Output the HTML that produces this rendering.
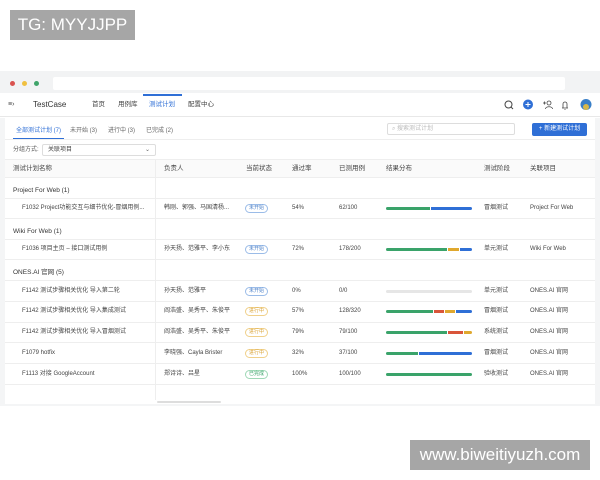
<!DOCTYPE html>
<html><head><meta charset="utf-8"><style>
*{margin:0;padding:0;box-sizing:border-box}
body{width:600px;height:480px;background:#fff;position:relative;overflow:hidden;font-family:"Liberation Sans","Noto Sans CJK SC",sans-serif;color:#333}
.a{position:absolute;white-space:nowrap;line-height:8px}
.wm{position:absolute;background:#a6a6a6;color:#fff;font-size:17px;display:flex;align-items:center;justify-content:center;line-height:20px}
.f7{font-size:6.5px;color:#444}
.tag{position:absolute;font-size:5px;border:1px solid;border-radius:6px;padding:0 3px;line-height:7px;height:9px}
.bar{position:absolute;height:3px;border-radius:2px;display:flex;overflow:hidden;width:86px;left:386px}
.line{position:absolute;left:5px;width:590px;height:1px;background:#eee}
</style></head><body>
<div class="wm" style="left:10px;top:10px;width:125px;height:30px">TG: MYYJJPP</div>
<div class="wm" style="left:410px;top:440px;width:180px;height:30px">www.biweitiyuzh.com</div>

<div class="a" style="left:0;top:71px;width:600px;height:22px;background:#f2f3f4"></div>
<div class="a" style="left:10px;top:81px;width:5px;height:5px;border-radius:50%;background:#d9534f"></div>
<div class="a" style="left:22px;top:81px;width:5px;height:5px;border-radius:50%;background:#f0c040"></div>
<div class="a" style="left:34px;top:81px;width:5px;height:5px;border-radius:50%;background:#3fa46a"></div>
<div class="a" style="left:53px;top:77px;width:512px;height:13px;background:#fff;border-radius:2px"></div>

<div class="a" style="left:0;top:93px;width:600px;height:24px;background:#fff;border-bottom:1px solid #e8e8e8"></div>
<div class="a f7" style="left:8px;top:101px;font-size:7px">≡›</div>
<div class="a" style="left:33px;top:101px;font-size:8px;color:#333">TestCase</div>
<div class="a f7" style="left:92px;top:101px">首页</div>
<div class="a f7" style="left:118px;top:101px">用例库</div>
<div class="a f7" style="left:149px;top:101px;color:#2f6fd6">测试计划</div>
<div class="a" style="left:143px;top:94px;width:39px;height:1.5px;background:#2f6fd6"></div>
<div class="a f7" style="left:188px;top:101px">配置中心</div>
<svg class="a" style="left:503px;top:99px" width="90" height="12" viewBox="0 0 90 12">
<circle cx="5.5" cy="5.5" r="3.5" fill="none" stroke="#444" stroke-width="1"/><line x1="8" y1="8" x2="10" y2="10" stroke="#444"/>
<circle cx="25" cy="5.5" r="5" fill="#2f6fd6"/><path d="M22.5 5.5h5M25 3v5" stroke="#fff" stroke-width="1"/>
<circle cx="46" cy="4" r="2" fill="none" stroke="#444" stroke-width=".8"/><path d="M42.5 10c0-3 7-3 7 0M40 4h3M41.5 2.5v3" fill="none" stroke="#444" stroke-width=".8"/>
<path d="M59 9h6M60 9V5a2 2 0 014 0v4M61.5 10.5h1" fill="none" stroke="#444" stroke-width=".8"/>
<circle cx="83" cy="5.5" r="5.5" fill="#3a7fc8"/><circle cx="83" cy="8" r="3" fill="#d8b84a"/>
</svg>

<div class="a" style="left:0;top:118px;width:600px;height:288px;background:#f4f5f6"></div>
<div class="a" style="left:5px;top:118px;width:590px;height:286px;background:#fff"></div>

<div class="a" style="left:16px;top:127px;font-size:6px;color:#2f6fd6">全部测试计划 (7)</div>
<div class="a" style="left:13px;top:138px;width:51px;height:1.5px;background:#2f6fd6"></div>
<div class="a" style="left:70px;top:127px;font-size:6px;color:#666">未开始 (3)</div>
<div class="a" style="left:108px;top:127px;font-size:6px;color:#666">进行中 (3)</div>
<div class="a" style="left:146px;top:127px;font-size:6px;color:#666">已完成 (2)</div>
<div class="a" style="left:387px;top:123px;width:128px;height:12px;border:1px solid #ddd;border-radius:2px"></div>
<div class="a" style="left:392px;top:125px;font-size:6px;color:#bbb">⌕ 搜索测试计划</div>
<div class="a" style="left:532px;top:123px;width:55px;height:13px;background:#2f6fd6;border-radius:2px;color:#fff;font-size:6px;text-align:center;line-height:13px">+ 新建测试计划</div>
<div class="a" style="left:5px;top:139px;width:590px;height:1px;background:#eee"></div>

<div class="a" style="left:13px;top:146px;font-size:6px;color:#555">分组方式:</div>
<div class="a" style="left:42px;top:144px;width:114px;height:12px;border:1px solid #ddd;border-radius:2px"></div>
<div class="a" style="left:48px;top:146px;font-size:6px;color:#444">关联项目</div>
<div class="a" style="left:145px;top:146px;font-size:6px;color:#666">⌄</div>

<div class="a" style="left:5px;top:159px;width:590px;height:19px;background:#fafafa;border-top:1px solid #eee;border-bottom:1px solid #eee"></div>
<div class="a" style="left:155px;top:159px;width:1px;height:241px;background:#eee"></div>
<div class="a f7" style="left:13px;top:165px">测试计划名称</div>
<div class="a f7" style="left:164px;top:165px">负责人</div>
<div class="a f7" style="left:246px;top:165px">当前状态</div>
<div class="a f7" style="left:292px;top:165px">通过率</div>
<div class="a f7" style="left:339px;top:165px">已测用例</div>
<div class="a f7" style="left:386px;top:165px">结果分布</div>
<div class="a f7" style="left:484px;top:165px">测试阶段</div>
<div class="a f7" style="left:530px;top:165px">关联项目</div>

<div class="a f7" style="left:13px;top:187px;color:#333">Project For Web (1)</div>
<div class="line" style="top:198px"></div>
<div class="line" style="top:218px"></div>
<div class="a f7" style="left:13px;top:228px;color:#333">Wiki For Web (1)</div>
<div class="line" style="top:239px"></div>
<div class="line" style="top:259px"></div>
<div class="a f7" style="left:13px;top:269px;color:#333">ONES.AI 官网 (5)</div>
<div class="line" style="top:280px"></div>
<div class="line" style="top:301px"></div>
<div class="line" style="top:322px"></div>
<div class="line" style="top:342px"></div>
<div class="line" style="top:363px"></div>
<div class="line" style="top:384px"></div>
<div class="a" style="left:157px;top:401px;width:64px;height:2px;background:#ddd;border-radius:1px"></div>

<div class="a f7" style="left:22px;top:204px;font-size:6px">F1032 Project功能交互与细节优化-冒烟用例...</div>
<div class="a f7" style="left:164px;top:204px;font-size:6px">韩刚、郭强、马国清杨...</div>
<div class="tag" style="left:245px;top:204px;color:#4a7fc8;border-color:#9bbce8">未开始</div>
<div class="a f7" style="left:292px;top:204px;font-size:6px">54%</div>
<div class="a f7" style="left:339px;top:204px;font-size:6px">62/100</div>
<div class="bar" style="top:207px"><i style="width:44px;background:#3aa36a"></i><i style="width:1px;background:#fff"></i><i style="flex:1;background:#2f6fd6"></i></div>
<div class="a f7" style="left:484px;top:204px;font-size:6px">冒烟测试</div>
<div class="a f7" style="left:530px;top:204px;font-size:6px">Project For Web</div>

<div class="a f7" style="left:22px;top:245px;font-size:6px">F1036 项目主页 – 接口测试用例</div>
<div class="a f7" style="left:164px;top:245px;font-size:6px">孙天扬、范雅平、李小东</div>
<div class="tag" style="left:245px;top:245px;color:#4a7fc8;border-color:#9bbce8">未开始</div>
<div class="a f7" style="left:292px;top:245px;font-size:6px">72%</div>
<div class="a f7" style="left:339px;top:245px;font-size:6px">178/200</div>
<div class="bar" style="top:248px"><i style="width:61px;background:#3aa36a"></i><i style="width:1px;background:#fff"></i><i style="width:11px;background:#e0a82e"></i><i style="width:1px;background:#fff"></i><i style="flex:1;background:#2f6fd6"></i></div>
<div class="a f7" style="left:484px;top:245px;font-size:6px">单元测试</div>
<div class="a f7" style="left:530px;top:245px;font-size:6px">Wiki For Web</div>

<div class="a f7" style="left:22px;top:287px;font-size:6px">F1142 测试步骤相关优化 导入第二轮</div>
<div class="a f7" style="left:164px;top:287px;font-size:6px">孙天扬、范雅平</div>
<div class="tag" style="left:245px;top:287px;color:#4a7fc8;border-color:#9bbce8">未开始</div>
<div class="a f7" style="left:292px;top:287px;font-size:6px">0%</div>
<div class="a f7" style="left:339px;top:287px;font-size:6px">0/0</div>
<div class="bar" style="top:290px;background:#e6e6e6"></div>
<div class="a f7" style="left:484px;top:287px;font-size:6px">单元测试</div>
<div class="a f7" style="left:530px;top:287px;font-size:6px">ONES.AI 官网</div>

<div class="a f7" style="left:22px;top:307px;font-size:6px">F1142 测试步骤相关优化 导入集成测试</div>
<div class="a f7" style="left:164px;top:307px;font-size:6px">阎浩盛、吴秀平、朱俊平</div>
<div class="tag" style="left:245px;top:307px;color:#d9a030;border-color:#f0d08a">进行中</div>
<div class="a f7" style="left:292px;top:307px;font-size:6px">57%</div>
<div class="a f7" style="left:339px;top:307px;font-size:6px">128/320</div>
<div class="bar" style="top:310px"><i style="width:47px;background:#3aa36a"></i><i style="width:1px;background:#fff"></i><i style="width:10px;background:#d9553a"></i><i style="width:1px;background:#fff"></i><i style="width:10px;background:#e0a82e"></i><i style="width:1px;background:#fff"></i><i style="flex:1;background:#2f6fd6"></i></div>
<div class="a f7" style="left:484px;top:307px;font-size:6px">冒烟测试</div>
<div class="a f7" style="left:530px;top:307px;font-size:6px">ONES.AI 官网</div>

<div class="a f7" style="left:22px;top:328px;font-size:6px">F1142 测试步骤相关优化 导入冒烟测试</div>
<div class="a f7" style="left:164px;top:328px;font-size:6px">阎浩盛、吴秀平、朱俊平</div>
<div class="tag" style="left:245px;top:328px;color:#d9a030;border-color:#f0d08a">进行中</div>
<div class="a f7" style="left:292px;top:328px;font-size:6px">79%</div>
<div class="a f7" style="left:339px;top:328px;font-size:6px">79/100</div>
<div class="bar" style="top:331px"><i style="width:61px;background:#3aa36a"></i><i style="width:1px;background:#fff"></i><i style="width:15px;background:#d9553a"></i><i style="width:1px;background:#fff"></i><i style="flex:1;background:#e0a82e"></i></div>
<div class="a f7" style="left:484px;top:328px;font-size:6px">系统测试</div>
<div class="a f7" style="left:530px;top:328px;font-size:6px">ONES.AI 官网</div>

<div class="a f7" style="left:22px;top:349px;font-size:6px">F1079 hotfix</div>
<div class="a f7" style="left:164px;top:349px;font-size:6px">李晓强、Cayla Brister</div>
<div class="tag" style="left:245px;top:349px;color:#d9a030;border-color:#f0d08a">进行中</div>
<div class="a f7" style="left:292px;top:349px;font-size:6px">32%</div>
<div class="a f7" style="left:339px;top:349px;font-size:6px">37/100</div>
<div class="bar" style="top:352px"><i style="width:32px;background:#3aa36a"></i><i style="width:1px;background:#fff"></i><i style="flex:1;background:#2f6fd6"></i></div>
<div class="a f7" style="left:484px;top:349px;font-size:6px">冒烟测试</div>
<div class="a f7" style="left:530px;top:349px;font-size:6px">ONES.AI 官网</div>

<div class="a f7" style="left:22px;top:370px;font-size:6px">F1113 对接 GoogleAccount</div>
<div class="a f7" style="left:164px;top:370px;font-size:6px">郑诗诗、吕星</div>
<div class="tag" style="left:245px;top:370px;color:#3aa36a;border-color:#9fd8b6">已完成</div>
<div class="a f7" style="left:292px;top:370px;font-size:6px">100%</div>
<div class="a f7" style="left:339px;top:370px;font-size:6px">100/100</div>
<div class="bar" style="top:373px;background:#3aa36a"></div>
<div class="a f7" style="left:484px;top:370px;font-size:6px">验收测试</div>
<div class="a f7" style="left:530px;top:370px;font-size:6px">ONES.AI 官网</div>
</body></html>
